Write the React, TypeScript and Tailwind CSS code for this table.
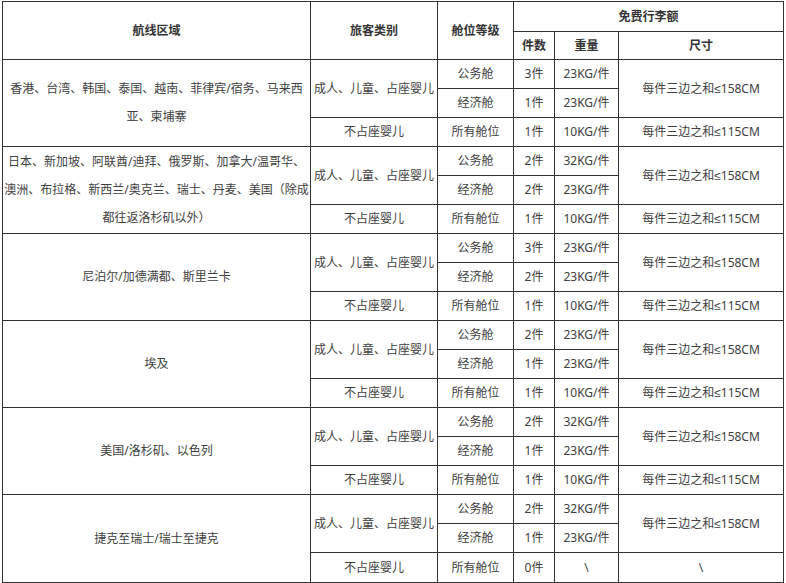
import React from "react";

type Group = {
  region: React.ReactNode;
  biz: [string, string];
  eco: [string, string];
  inf: [string, string, React.ReactNode];
};

const Le = () => <span className="font-['Liberation_Sans',sans-serif]">≤</span>;

const s158 = (
  <>
    每件三边之和
    <Le />
    158CM
  </>
);
const s115 = (
  <>
    每件三边之和
    <Le />
    115CM
  </>
);

const groups: Group[] = [
  {
    region: (
      <>
        香港、台湾、韩国、泰国、越南、菲律宾/宿务、马来西
        <br />
        亚、柬埔寨
      </>
    ),
    biz: ["3件", "23KG/件"],
    eco: ["1件", "23KG/件"],
    inf: ["1件", "10KG/件", s115],
  },
  {
    region: (
      <>
        日本、新加坡、阿联酋/迪拜、俄罗斯、加拿大/温哥华、
        <br />
        澳洲、布拉格、新西兰/奥克兰、瑞士、丹麦、美国（除成
        <br />
        都往返洛杉矶以外）
      </>
    ),
    biz: ["2件", "32KG/件"],
    eco: ["2件", "23KG/件"],
    inf: ["1件", "10KG/件", s115],
  },
  {
    region: <>尼泊尔/加德满都、斯里兰卡</>,
    biz: ["3件", "23KG/件"],
    eco: ["2件", "23KG/件"],
    inf: ["1件", "10KG/件", s115],
  },
  {
    region: <>埃及</>,
    biz: ["2件", "23KG/件"],
    eco: ["1件", "23KG/件"],
    inf: ["1件", "10KG/件", s115],
  },
  {
    region: <>美国/洛杉矶、以色列</>,
    biz: ["2件", "32KG/件"],
    eco: ["1件", "23KG/件"],
    inf: ["1件", "10KG/件", s115],
  },
  {
    region: <>捷克至瑞士/瑞士至捷克</>,
    biz: ["2件", "32KG/件"],
    eco: ["1件", "23KG/件"],
    inf: ["0件", "\\", "\\"],
  },
];

const cell = "bg-white flex items-center justify-center text-center whitespace-nowrap";
const head = cell + " font-bold text-[#333]";

export default function App() {
  return (
    <div className="w-[786px] h-[583px] bg-white overflow-hidden font-['Noto_Sans','Noto_Sans_CJK_SC',sans-serif] text-[12px] text-[#404040]">
      <div className="ml-[2px] mt-[1px] w-fit bg-[#333] p-px grid gap-px grid-cols-[307px_126px_75px_40px_63px_164px] grid-rows-[29px_27px_repeat(17,28px)_29px]">
        <div className={head + " row-span-2"}>航线区域</div>
        <div className={head + " row-span-2"}>旅客类别</div>
        <div className={head + " row-span-2"}>舱位等级</div>
        <div className={head + " col-span-3"}>免费行李额</div>
        <div className={head}>件数</div>
        <div className={head}>重量</div>
        <div className={head}>尺寸</div>
        {groups.map((g, i) => (
          <React.Fragment key={i}>
            <div className={cell + " row-span-3 leading-[28px]"}>
              <div>{g.region}</div>
            </div>
            <div className={cell + " row-span-2"}>成人、儿童、占座婴儿</div>
            <div className={cell}>公务舱</div>
            <div className={cell}>{g.biz[0]}</div>
            <div className={cell}>{g.biz[1]}</div>
            <div className={cell + " row-span-2"}>{s158}</div>
            <div className={cell}>经济舱</div>
            <div className={cell}>{g.eco[0]}</div>
            <div className={cell}>{g.eco[1]}</div>
            <div className={cell}>不占座婴儿</div>
            <div className={cell}>所有舱位</div>
            <div className={cell}>{g.inf[0]}</div>
            <div className={cell}>{g.inf[1]}</div>
            <div className={cell}>{g.inf[2]}</div>
          </React.Fragment>
        ))}
      </div>
    </div>
  );
}
